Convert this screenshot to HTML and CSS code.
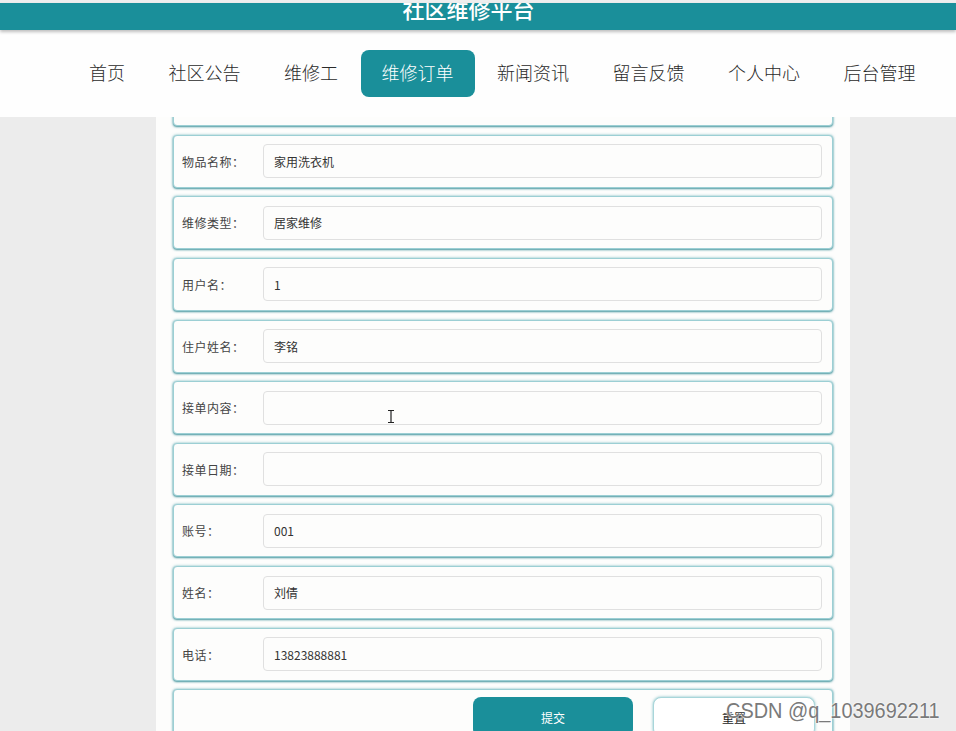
FILE: index.html
```html
<!DOCTYPE html>
<html lang="zh">
<head>
<meta charset="utf-8">
<title>社区维修平台</title>
<link rel="stylesheet" href="styles.css">
</head>
<body>
<div class="top-strip"></div>
<header class="bar"><h1 class="title">社区维修平台</h1></header>
<nav class="nav">
  <a class="nav-item">首页</a>
  <a class="nav-item">社区公告</a>
  <a class="nav-item">维修工</a>
  <a class="nav-item active">维修订单</a>
  <a class="nav-item">新闻资讯</a>
  <a class="nav-item">留言反馈</a>
  <a class="nav-item">个人中心</a>
  <a class="nav-item">后台管理</a>
</nav>
<main class="main">
  <div class="panel">
    <form class="form">
      <div class="row"><label class="label">订单编号：</label><input class="field" value=""></div>
      <div class="row"><label class="label">物品名称：</label><input class="field" value="家用洗衣机"></div>
      <div class="row"><label class="label">维修类型：</label><input class="field" value="居家维修"></div>
      <div class="row"><label class="label">用户名：</label><input class="field" value="1"></div>
      <div class="row"><label class="label">住户姓名：</label><input class="field" value="李铭"></div>
      <div class="row"><label class="label">接单内容：</label><input class="field" value=""></div>
      <div class="row"><label class="label">接单日期：</label><input class="field" value=""></div>
      <div class="row"><label class="label">账号：</label><input class="field" value="001"></div>
      <div class="row"><label class="label">姓名：</label><input class="field" value="刘倩"></div>
      <div class="row"><label class="label">电话：</label><input class="field" value="13823888881"></div>
      <div class="row actions">
        <button type="button" class="btn btn-primary">提交</button>
        <button type="button" class="btn btn-reset">重置</button>
      </div>
    </form>
  </div>
</main>
<svg class="cursor" width="8" height="13" viewBox="0 0 8 13"><path d="M1 0.5h6M1 12.5h6M4 0.5v12" stroke="#222" stroke-width="1.2" fill="none"/></svg>
<div class="watermark">CSDN @q_1039692211</div>
</body>
</html>
```

FILE: styles.css
```css
* { box-sizing: border-box; }
html, body { margin: 0; padding: 0; }
body {
  width: 956px;
  height: 731px;
  overflow: hidden;
  background: #ececec;
  font-family: "Noto Sans CJK SC", "Noto Sans", sans-serif;
  position: relative;
}
.top-strip {
  height: 3px;
  background: #eeeeee;
}
.bar {
  height: 27px;
  background: #1a8f9a;
  overflow: hidden;
  display: flex;
  justify-content: center;
  padding-right: 19px;
  box-shadow: 0 2px 3px rgba(0, 0, 0, 0.25);
  position: relative;
  z-index: 2;
}
.title {
  margin: -7px 0 0 0;
  font-size: 22px;
  line-height: 24px;
  font-weight: 500;
  color: #ffffff;
  letter-spacing: 0;
}
.nav {
  height: 87px;
  background: #fefefe;
  display: flex;
  align-items: center;
  padding-left: 68px;
  gap: 1.5px;
}
.nav-item {
  height: 47px;
  padding: 0 21px 4px;
  display: flex;
  align-items: center;
  font-size: 18px;
  font-weight: 300;
  color: #2a2a2a;
  border-radius: 8px;
  white-space: nowrap;
}
.nav-item.active {
  background: #1a8f9a;
  color: #ffffff;
}
.main {
  height: 614px;
  overflow: hidden;
  background: #ececec;
}
.panel {
  display: flow-root;
  margin-left: 156px;
  width: 694px;
  height: 100%;
  background: #fdfdfc;
  padding: 0 17px;
}
.form {
  margin-top: -44px;
  display: flex;
  flex-direction: column;
  gap: 8.65px;
}
.row {
  height: 53px;
  display: flex;
  align-items: center;
  padding: 0 10px 0 8px;
  border: 1px solid #9ccfd4;
  border-radius: 4px;
  background: #fdfdfc;
  box-shadow: 0 0 3px rgba(40, 150, 160, 0.55), 0 1px 2px rgba(30, 120, 130, 0.7);
}
.label {
  width: 81px;
  flex: none;
  font-size: 12px;
  letter-spacing: 0.5px;
  color: #444;
}
.field {
  flex: 1;
  height: 34px;
  border: 1px solid #e0e0e0;
  border-radius: 4px;
  background: #fdfdfc;
  padding: 0 10px;
  font-family: "Noto Sans CJK SC", "Noto Sans", sans-serif;
  font-size: 12px;
  color: #333;
  outline: none;
}
.actions {
  height: 60px;
  align-items: flex-start;
  justify-content: flex-end;
  padding: 7px 17px 0 0;
  gap: 20px;
}
.btn {
  height: 40px;
  border-radius: 8px;
  font-family: "Noto Sans CJK SC", "Noto Sans", sans-serif;
  font-size: 12px;
  cursor: pointer;
}
.btn-primary {
  width: 160px;
  background: #1a8f9a;
  color: #ffffff;
  border: none;
}
.btn-reset {
  width: 162px;
  background: #ffffff;
  color: #222;
  border: 1px solid #a8d6da;
  box-shadow: 0 0 3px rgba(40, 150, 160, 0.6);
}
.cursor {
  position: absolute;
  left: 387px;
  top: 410px;
}
.watermark {
  position: absolute;
  left: 726px;
  top: 697px;
  font-family: "Liberation Sans", Arial, sans-serif;
  font-size: 22px;
  line-height: 28px;
  color: #7a7a7a;
  transform: scaleX(0.905);
  transform-origin: left center;
  text-shadow: 0 0 2px #fff, 0 0 2px #fff;
  white-space: nowrap;
}
```
